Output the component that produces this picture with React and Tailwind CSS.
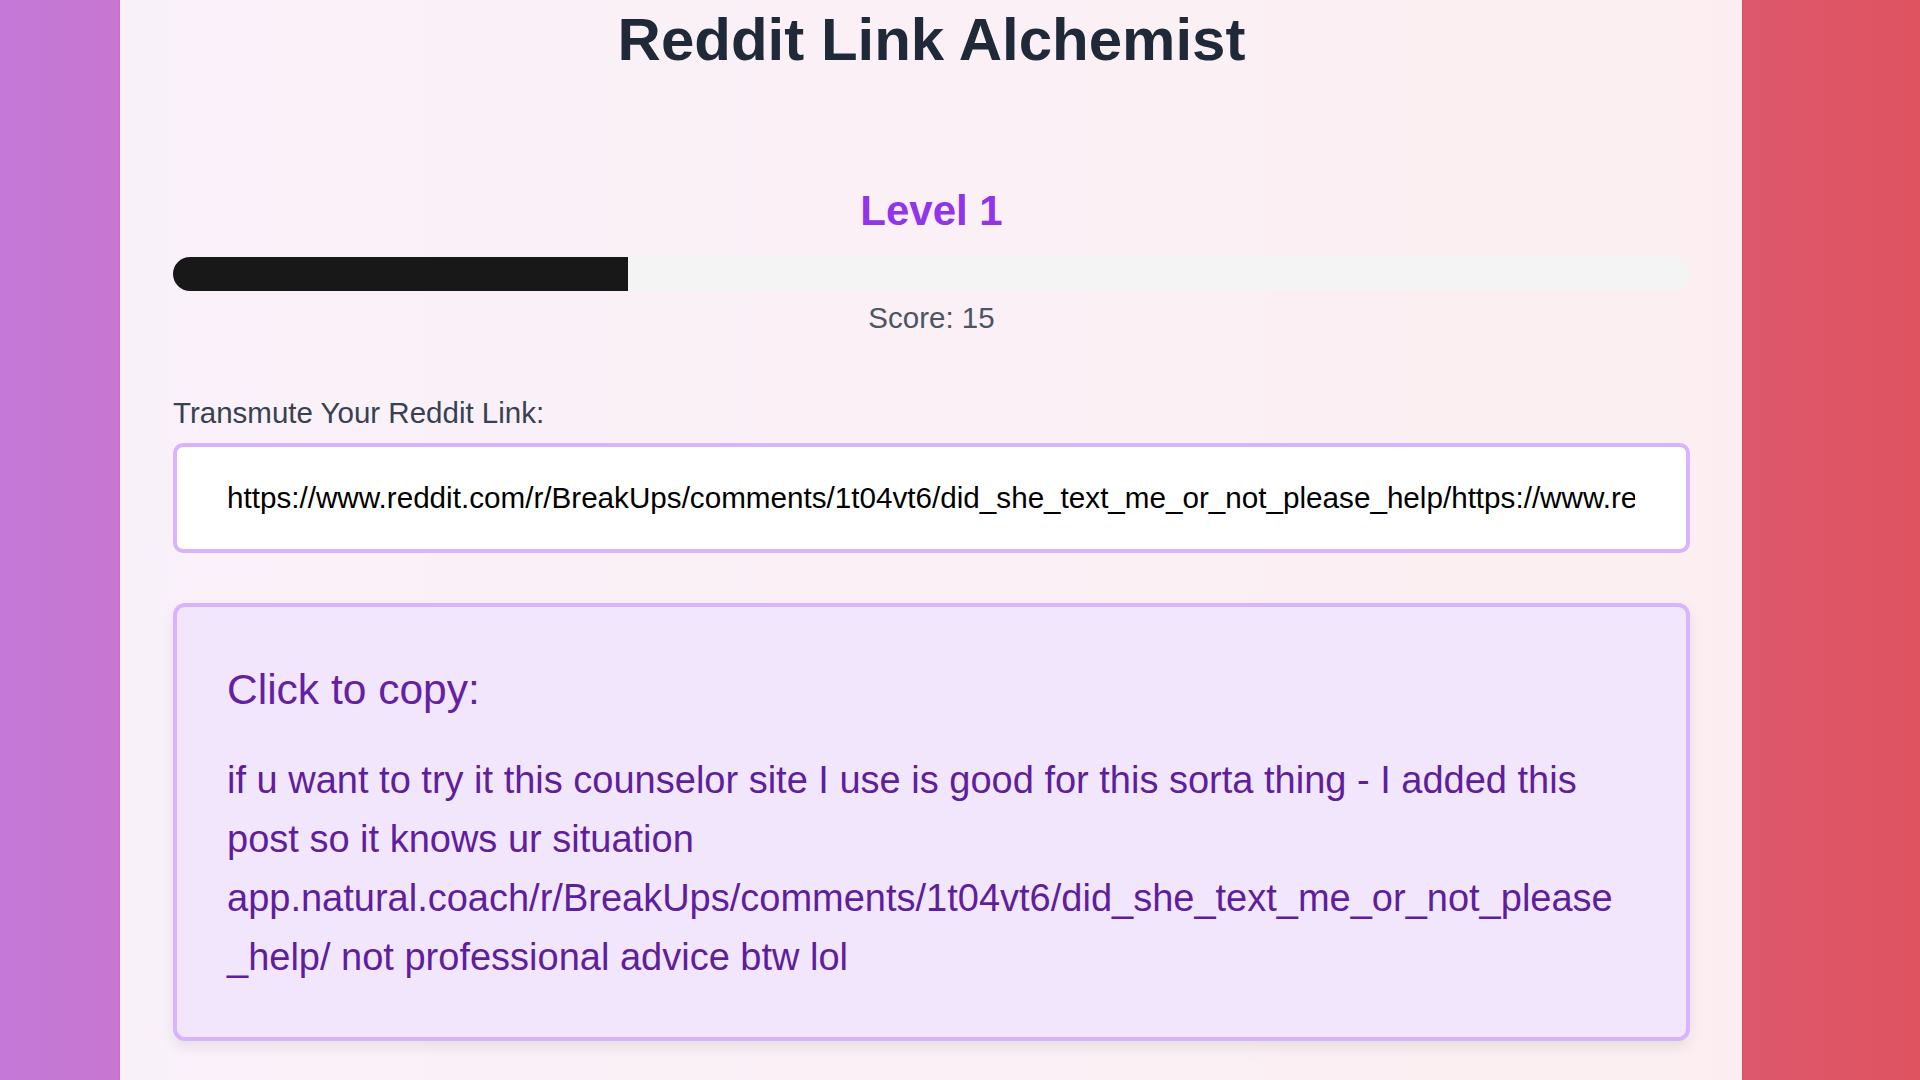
import React, { useState } from "react";

const LINK =
  "https://www.reddit.com/r/BreakUps/comments/1t04vt6/did_she_text_me_or_not_please_help/https://www.reddit.com/r/BreakUps/comments/1t04vt6/did_she_text_me_or_not_please_help/";

const COPY_TEXT =
  "if u want to try it this counselor site I use is good for this sorta thing - I added this post so it knows ur situation app.natural.coach/r/BreakUps/comments/1t04vt6/did_she_text_me_or_not_please_help/ not professional advice btw lol";

const ProgressBar = ({ value }) => (
  <div className="mt-[21px] h-[34px] w-full overflow-hidden rounded-full bg-[#f4f4f4]">
    <div className="h-full bg-[#181818]" style={{ width: `${value}%` }} />
  </div>
);

export default function App() {
  const [link, setLink] = useState(LINK);
  const score = 15;

  return (
    <div className="h-[1080px] w-full overflow-hidden bg-linear-to-r from-[#c578d8] to-[#df5360] font-['Liberation_Sans',Arial,sans-serif]">
      <div className="ml-[120px] h-full w-[1622px] bg-white/90 pt-[10px] pl-[53px] pr-[52px] shadow-[0_0_2px_rgba(0,0,0,0.15)]">
        <h1 className="text-center text-[60px] font-bold leading-none text-[#1f2937]">
          Reddit Link Alchemist
        </h1>

        <div className="mt-[116px] text-center text-[42px] font-bold leading-[50px] text-[#9333ea]">
          Level 1
        </div>
        <ProgressBar value={30} />
        <div className="mt-[5px] text-center text-[29.5px] leading-[44px] text-[#4b5563]">
          Score: {score}
        </div>

        <label className="mt-[51px] block text-[29.5px] leading-[44px] text-[#374151]">
          Transmute Your Reddit Link:
        </label>
        <input
          type="text"
          value={link}
          onChange={(e) => setLink(e.target.value)}
          className="mt-[8px] block h-[110px] w-full rounded-[10px] border-4 border-[#d8b4fe] bg-white pl-[50px] pr-[51px] text-[29.65px] text-black outline-none"
        />

        <div className="mt-[50px] rounded-[12px] border-4 border-[#d8b4fe] bg-[#f2e6fd] pt-[57px] pb-[50px] pl-[50px] pr-[56px] shadow-[0_6px_14px_rgba(0,0,0,0.08)]">
          <h3 className="text-[42.5px] leading-[52px] text-[#6421a3]">Click to copy:</h3>
          <p className="mt-[35px] text-[38px] leading-[59px] text-[#5f1f9c] [overflow-wrap:break-word]">
            {COPY_TEXT}
          </p>
        </div>
      </div>
    </div>
  );
}
